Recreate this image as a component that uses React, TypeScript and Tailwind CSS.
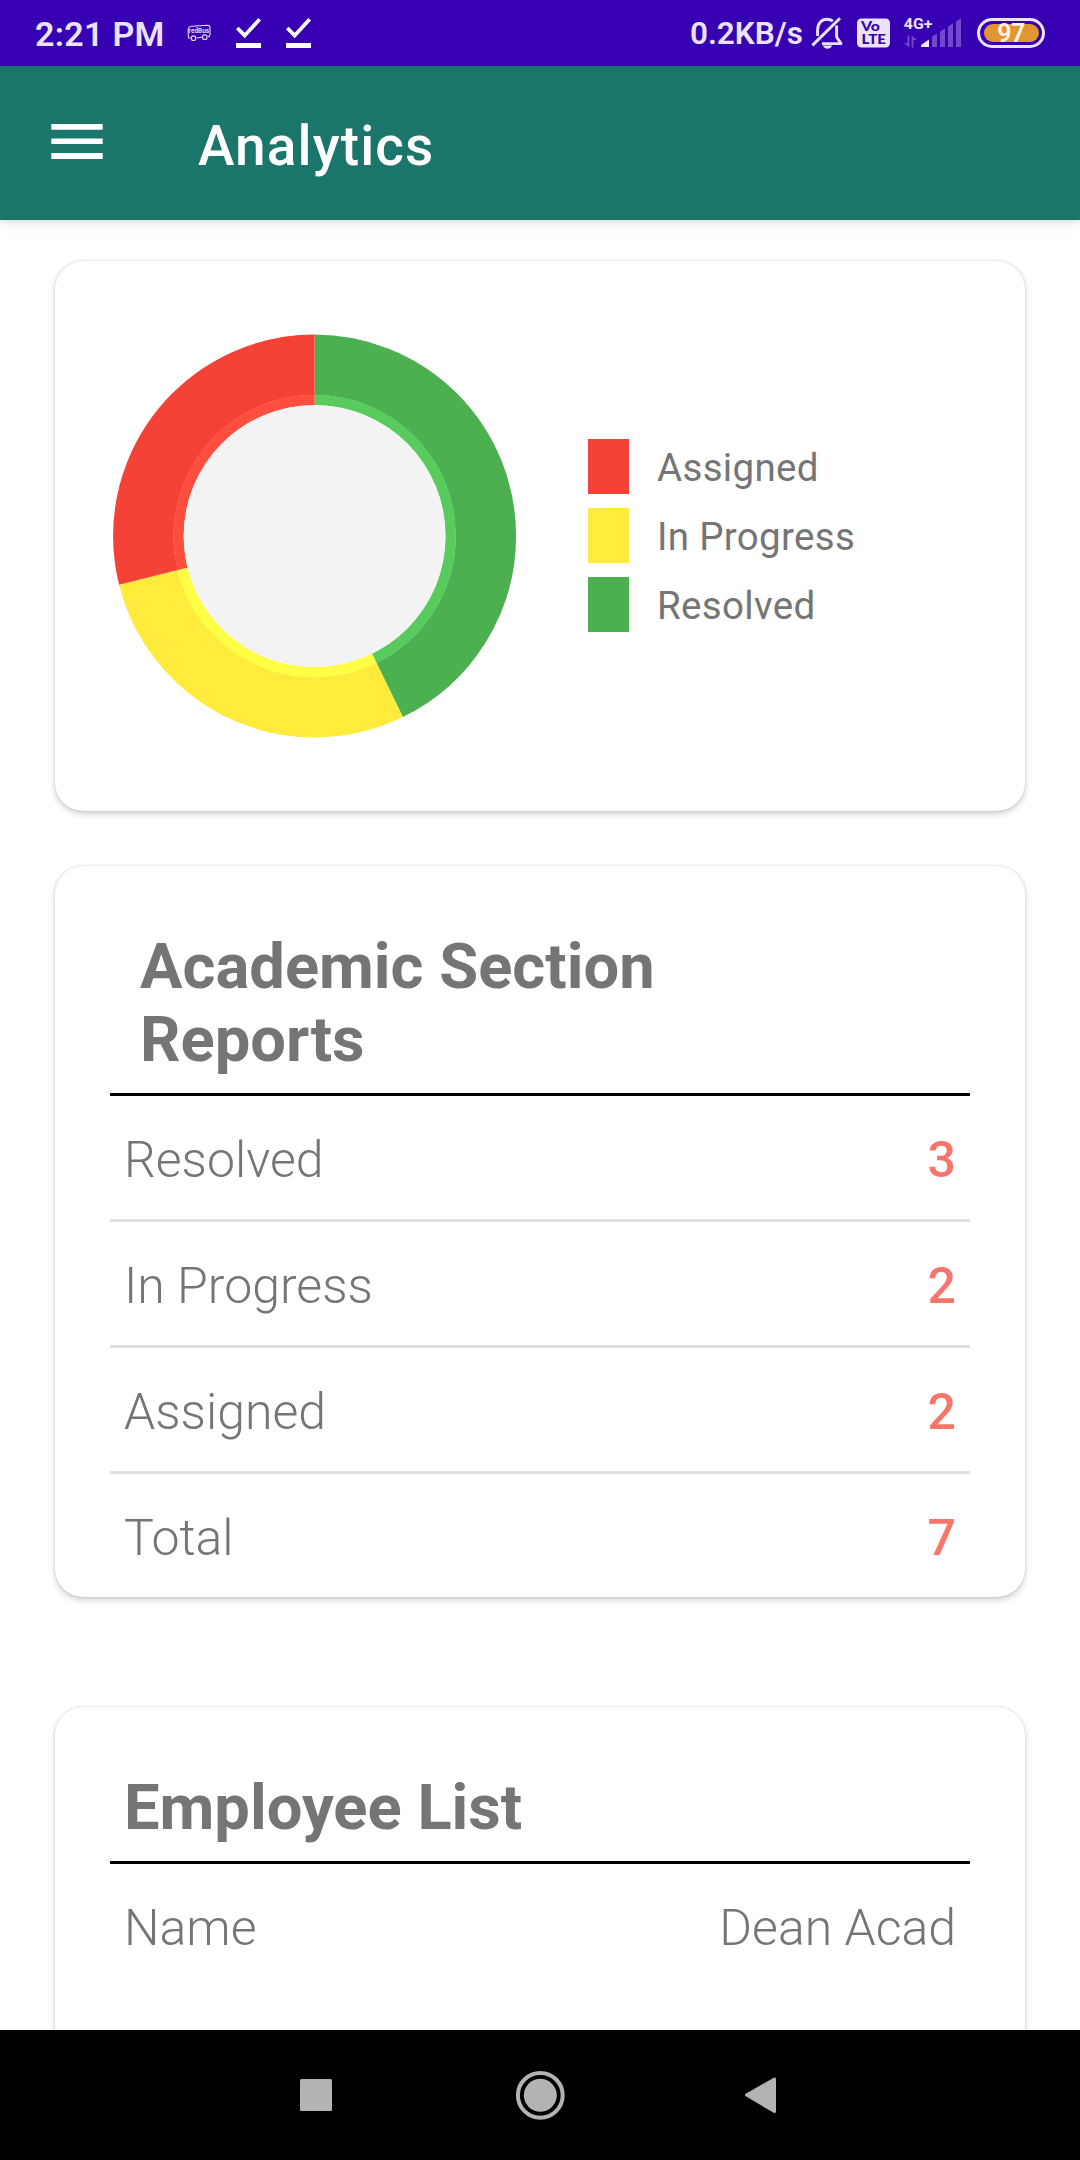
import type { ReactNode } from "react";

type Row = { label: string; value: string };

const reportRows: Row[] = [
  { label: "Resolved", value: "3" },
  { label: "In Progress", value: "2" },
  { label: "Assigned", value: "2" },
  { label: "Total", value: "7" },
];

// Slices run clockwise from the top of the ring; sweeps are in degrees.
const slices = [
  { label: "Resolved", sweep: 154, color: "#4caf50", inner: "#57cb5b" },
  { label: "In Progress", sweep: 102, color: "#ffeb3b", inner: "#ffff43" },
  { label: "Assigned", sweep: 104, color: "#f44336", inner: "#ff4d3e" },
];

const legend = [
  { label: "Assigned", swatch: "bg-[#f44336]" },
  { label: "In Progress", swatch: "bg-[#ffeb3b]" },
  { label: "Resolved", swatch: "bg-[#4caf50]" },
];

function BusIcon() {
  return (
    <svg className="ml-[22px] h-[18px] w-[24px]" viewBox="0 0 24 18" fill="none" stroke="#e4d9fa" strokeWidth="1.1">
      <path d="M3.5 14H1.6Q1 10 1.2 6Q1.3 2.6 4.5 2.2L20.5 1.2Q23 1.2 23 4V10.5Q23 12.6 21 12.8M9.5 14L15 13.3" />
      <circle cx="6.5" cy="14.2" r="2.3" />
      <circle cx="17.8" cy="13.2" r="2.3" />
      <text x="1.6" y="9.4" fontFamily="Roboto" fontWeight="700" fontSize="7.4" textLength="20.5" lengthAdjust="spacingAndGlyphs" fill="#e4d9fa" stroke="none">
        redBus
      </text>
    </svg>
  );
}

function CheckIcon() {
  return (
    <svg className="ml-[25px] h-[30px] w-[25px]" viewBox="0 0 25 30" fill="#fff">
      <path d="M0 11.2L2.6 8.7L8.7 14.7L22.3 0L25 2.6L8.7 20.3Z" />
      <path d="M0 25H25V30H0Z" />
    </svg>
  );
}

function MutedBellIcon() {
  return (
    <svg className="ml-[7px] h-[34px] w-[34px]" viewBox="0 0 34 34" fill="none" stroke="#ebe2fc" strokeWidth="2.9">
      <path d="M7.6 20V14C7.6 7 12 3.2 17 3.2C19.2 3.2 21.2 3.9 22.9 5.2" />
      <path d="M26.6 9.5V21L31 27.6H12" strokeLinejoin="round" />
      <path d="M30 2.2L2.4 29.4" />
      <path d="M12.8 29.6H22.2Q20.6 32.8 17.5 32.8Q14.4 32.8 12.8 29.6Z" fill="#ebe2fc" stroke="none" />
    </svg>
  );
}

function VolteIcon() {
  return (
    <svg className="ml-[13px] h-[30px] w-[33px]" viewBox="0 0 33 30" fontFamily="Lato" fontWeight="900">
      <rect y="0.5" width="33" height="29" rx="4.5" fill="#ebe2fc" />
      <text x="4" y="13.2" fontSize="13.2" textLength="19" lengthAdjust="spacingAndGlyphs" fill="#3700b3">Vo</text>
      <text x="4.6" y="26.4" fontSize="13.6" textLength="24.5" lengthAdjust="spacingAndGlyphs" fill="#3700b3">LTE</text>
    </svg>
  );
}

function SignalIcon() {
  return (
    <svg className="ml-[12px] h-[40px] w-[62px]" viewBox="-2 -5 62 40">
      <text x="-0.2" y="10.8" fontFamily="Roboto" fontWeight="700" fontSize="15.5" textLength="28.6" lengthAdjust="spacingAndGlyphs" fill="#ebe2fc">
        4G+
      </text>
      <g fill="#7349cc">
        <path d="M3.6 17.5H5.4V29.5L0 25H3.6Z" />
        <path d="M7.6 29.5H9.4V22H13L7.6 17.5Z" />
        <path d="M28 18.6L33 15.4V29H28Z" />
        <path d="M36 13.6L41 10.4V29H36Z" />
        <path d="M44 8.6L49 5.2V29H44Z" />
        <path d="M52 3.4L57 0.2V29H52Z" />
      </g>
      <path d="M17 27L25 21.4V29H17Z" fill="#f1ebfd" />
    </svg>
  );
}

function StatusBar() {
  return (
    <div className="flex h-[66px] shrink-0 items-center bg-[#3700b3] text-[#ebe2fc]">
      <span className="ml-[35px] w-[130px] pt-[2px] text-[34px] leading-none font-semibold tracking-[0.3px] whitespace-nowrap">2:21 PM</span>
      <BusIcon />
      <CheckIcon />
      <CheckIcon />
      <span className="ml-auto pt-[2px] text-[31.5px] leading-none font-semibold whitespace-nowrap">0.2KB/s</span>
      <MutedBellIcon />
      <VolteIcon />
      <SignalIcon />
      <div className="mr-[35px] ml-[13px] flex h-[30px] w-[68px] items-center justify-center rounded-full border-[3px] border-[#ebe2fc]">
        <div className="flex h-[18px] w-[55px] items-center justify-center rounded-full bg-[#e29632] pt-[1px] text-[25px] leading-none font-semibold tracking-[-0.5px] text-[#fdf3e4]">97</div>
      </div>
    </div>
  );
}

function AppBar() {
  return (
    <header className="relative z-10 flex h-[154px] shrink-0 items-center bg-[#1a756a] pb-[1px] shadow-[0_2px_5px_rgba(0,0,0,0.08),0_5px_14px_rgba(0,0,0,0.06)]">
      <svg className="mt-[-2px] ml-[51px] h-[35px] w-[52px]" viewBox="0 0 52 35" fill="#fff">
        <path d="M0.3 0H51.7V5.8H0.3ZM0.3 14.4H51.7V20.1H0.3ZM0.3 29.1H51.7V34.9H0.3Z" />
      </svg>
      <h1 className="mt-[7px] ml-[95px] text-[55px] leading-[64px] font-medium tracking-[1.1px] text-white">Analytics</h1>
    </header>
  );
}

function Card({ className, children }: { className: string; children: ReactNode }) {
  return (
    <section className={`mx-[55px] shrink-0 rounded-[28px] bg-white shadow-[0_0_2px_rgba(0,0,0,0.16),0_3px_6px_rgba(0,0,0,0.19)] ${className}`}>
      {children}
    </section>
  );
}

function Ring({ radius, width, tone }: { radius: number; width: number; tone: "color" | "inner" }) {
  let start = 0;
  return (
    <g fill="none" strokeWidth={width} transform="rotate(-90 201.6 202)">
      {slices.map((slice) => {
        const offset = start;
        start += slice.sweep;
        return (
          <circle key={slice.label} cx="201.6" cy="202" r={radius} pathLength={360} stroke={slice[tone]} strokeDasharray={`${slice.sweep} ${360 - slice.sweep}`} strokeDashoffset={-offset} />
        );
      })}
    </g>
  );
}

function ChartCard() {
  return (
    <Card className="mt-[41px] flex h-[550px] items-center">
      <svg className="ml-[58px] h-[404px] w-[404px]" viewBox="0 0 404 404">
        <Ring radius={171.25} width={60.5} tone="color" />
        <Ring radius={136} width={10.5} tone="inner" />
        <circle cx="201.6" cy="202" r="131" fill="#f3f3f3" />
      </svg>
      <ul className="mt-[-1px] ml-[71px] flex flex-col gap-[14px]">
        {legend.map((item) => (
          <li key={item.label} className="flex h-[55px] items-center">
            <span className={`h-[55px] w-[41px] ${item.swatch}`} />
            <span className="ml-[28px] pt-[3px] text-[38.5px] leading-[52px] tracking-[0.32px] text-[#757575]">{item.label}</span>
          </li>
        ))}
      </ul>
    </Card>
  );
}

export default function App() {
  return (
    <div className="flex h-[2160px] w-[1080px] flex-col overflow-hidden bg-white font-['Roboto',sans-serif]">
      <StatusBar />
      <AppBar />
      <main className="flex h-[1810px] shrink-0 flex-col overflow-hidden">
        <ChartCard />
        <Card className="mt-[55px] h-[731px] px-[55px] pt-[64px]">
          <h2 className="h-[163px] pl-[30px] text-[63.25px] leading-[73px] font-bold text-[#757575]">
            Academic Section
            <br />
            Reports
          </h2>
          <dl className="divide-y-[3px] divide-[#e0e0e0] border-t-[3px] border-black">
            {reportRows.map((row) => (
              <div key={row.label} className="flex h-[126px] items-center justify-between px-[14px] pt-[4px] last:h-[123px]">
                <dt className="text-[50px] leading-[60px] font-light text-[#757575]">{row.label}</dt>
                <dd className="text-[50px] leading-[60px] font-medium text-[#f8756c]">{row.value}</dd>
              </div>
            ))}
          </dl>
        </Card>
        <Card className="mt-[110px] h-[460px] px-[55px] pt-[64px]">
          <h2 className="h-[90px] pl-[14px] text-[63.25px] leading-[73px] font-bold text-[#757575]">Employee List</h2>
          <div className="flex h-[126px] items-center justify-between border-t-[3px] border-black px-[14px] pt-[4px] text-[50px] leading-[60px] font-light text-[#757575]">
            <span>Name</span>
            <span>Dean Acad</span>
          </div>
        </Card>
      </main>
      <nav className="flex h-[130px] shrink-0 items-center bg-black">
        <svg className="ml-[300px] h-[32px] w-[32px]" viewBox="0 0 32 32" fill="#b3b3b3">
          <rect width="32" height="32" rx="1.5" />
        </svg>
        <svg className="ml-[183px] h-[50px] w-[50px]" viewBox="0 0 50 50">
          <circle cx="25.3" cy="25.3" r="22.4" fill="none" stroke="#b3b3b3" strokeWidth="4" />
          <circle cx="25.3" cy="25.3" r="16.5" fill="#b3b3b3" />
        </svg>
        <svg className="ml-[179px] h-[36px] w-[32px]" viewBox="0 0 32 36" fill="#b3b3b3" stroke="#b3b3b3" strokeWidth="3" strokeLinejoin="round">
          <path d="M2.5 18L30.5 2V34.5Z" />
        </svg>
      </nav>
    </div>
  );
}
